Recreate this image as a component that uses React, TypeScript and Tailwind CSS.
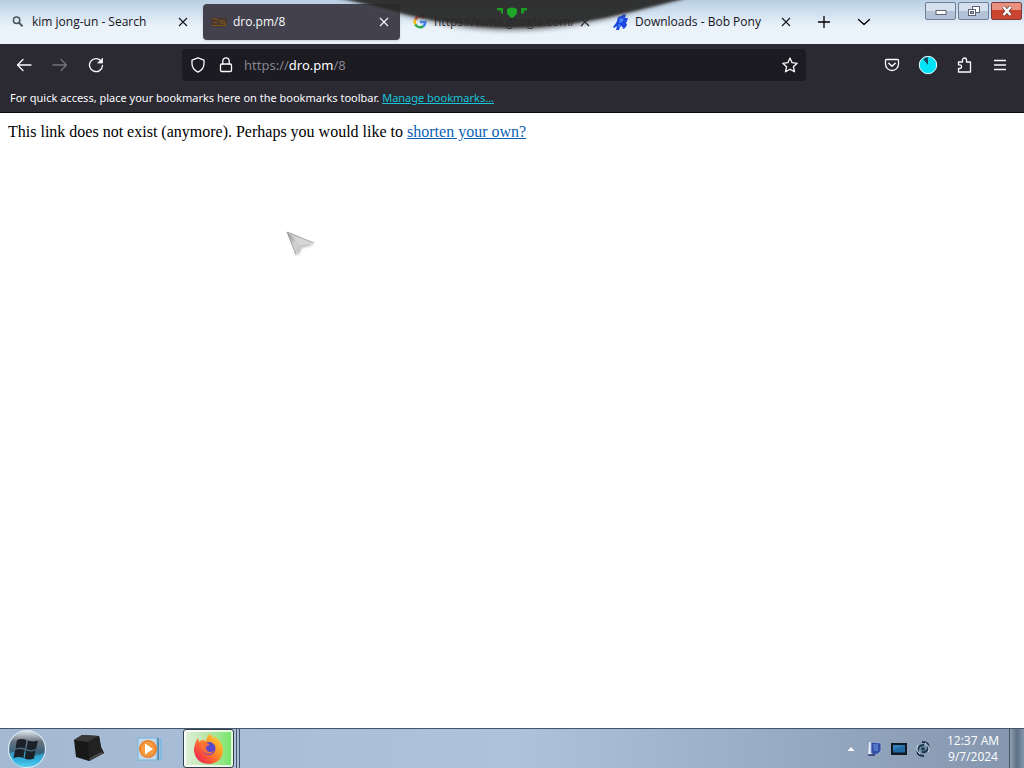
import { useState } from "react";
import type { ReactNode } from "react";
import clsx from "clsx";

interface Tab {
  id: string;
  title: string;
  icon: ReactNode;
}

const tabs: Tab[] = [
  { id: "search", title: "kim jong-un - Search", icon: <SearchIcon /> },
  { id: "dro", title: "dro.pm/8", icon: <DroIcon /> },
  { id: "google", title: "https://www.google.com/", icon: <GoogleIcon /> },
  { id: "pony", title: "Downloads - Bob Pony", icon: <PonyIcon /> },
];

function SearchIcon() {
  return (
    <svg className="size-4" viewBox="0 0 16 16" fill="none" stroke="#4a5560">
      <circle cx="6.6" cy="6.2" r="3.2" strokeWidth="1.5" />
      <path d="M9 8.8l3.6 3.6" strokeWidth="2" />
    </svg>
  );
}

function DroIcon() {
  return (
    <svg className="size-4" viewBox="0 0 16 16" fill="none">
      <rect x="0" y="3.5" width="16" height="9.5" fill="#49382f" />
      <path d="M1 5h5l2 2h6M1 11.5h14M2 8.5h4M9 9h5v2" stroke="#805417" strokeWidth="1" />
    </svg>
  );
}

function GoogleIcon() {
  return (
    <svg className="size-4" viewBox="0 0 16 16" fill="none" strokeWidth="2.5">
      <path d="M12.2 4A5.4 5.4 0 0 0 3.3 5.4" stroke="#ea4335" />
      <path d="M3.3 5.4a5.4 5.4 0 0 0 0 5" stroke="#fbbc05" />
      <path d="M3.3 10.4a5.4 5.4 0 0 0 8.2 1.6" stroke="#34a853" />
      <path d="M11.5 12a5.4 5.4 0 0 0 1.8-4H8" stroke="#4285f4" />
    </svg>
  );
}

function PonyIcon() {
  return (
    <svg className="size-4" viewBox="0 0 16 16">
      <path
        d="M5 3l3-1 3-2 2 1-1 3h3l-1 3-1 2 1 2-2 3-2 1-1-3-2 1-1 3H3l1-4-3 2-1-1 3-4 1-2z"
        fill="#1d49e0"
      />
      <path d="M7 4l4 1-2 3-3 1zM5 10l3 1-2 3z" fill="#4a86ff" />
    </svg>
  );
}

function CloseIcon() {
  return (
    <svg className="size-4" viewBox="0 0 16 16" fill="none" stroke="currentColor" strokeWidth="1.1">
      <path d="M4 4l8 8M12 4l-8 8" />
    </svg>
  );
}

function ToolIcon({ children, className }: { children: ReactNode; className?: string }) {
  return (
    <svg
      className={clsx("size-4 shrink-0", className)}
      viewBox="0 0 16 16"
      fill="none"
      stroke="currentColor"
      strokeWidth="1.3"
      strokeLinecap="round"
      strokeLinejoin="round"
    >
      {children}
    </svg>
  );
}

function IconButton({ label, className, children }: { label: string; className?: string; children: ReactNode }) {
  return (
    <button
      type="button"
      aria-label={label}
      className={clsx("flex h-8 w-9 items-center justify-center", className)}
    >
      {children}
    </button>
  );
}

function Notch() {
  return (
    <svg
      className="pointer-events-none absolute top-0 left-1/2 h-10 w-[360px] -translate-x-1/2"
      viewBox="0 0 360 40"
      aria-hidden="true"
    >
      <defs>
        <filter id="notchShadow" x="-5%" y="-40%" width="110%" height="180%">
          <feGaussianBlur stdDeviation="2" />
        </filter>
        <filter id="notchEdge">
          <feGaussianBlur stdDeviation="0.8" />
        </filter>
      </defs>
      <path d="M4 -3C60 10 105 31 178 31S300 12 358 -3z" fill="#555" opacity="0.6" filter="url(#notchShadow)" />
      <path d="M2 -3C60 8 105 28 178 28S300 10 360 -3z" fill="#252525" opacity="0.88" filter="url(#notchEdge)" />
      <path d="M165 8h6v6l-2-1v-2l-4-1z" fill="#1c9a24" />
      <path d="M175 9q5-3 10 0v4q-1 3-5 5-4-2-5-5z" fill="#1fa526" />
      <path d="M189 8h6v2l-3 1v2l-3 1z" fill="#1c9a24" />
    </svg>
  );
}

function WindowButtons() {
  const base =
    "flex h-[18px] w-[31px] items-center justify-center rounded-[2px] border";
  const pale = "border-[#6f7f97] bg-linear-to-b from-[#d5dfed] from-50% to-[#b3c2d6] to-50%";
  return (
    <div className="flex gap-0.5 self-start pt-0.5 pr-0.5">
      <button type="button" aria-label="Minimize" className={clsx(base, pale)}>
        <svg className="h-3 w-4" viewBox="0 0 16 12">
          <rect x="3" y="5.5" width="10" height="4" fill="#fff" stroke="#5f6670" />
        </svg>
      </button>
      <button type="button" aria-label="Restore" className={clsx(base, pale)}>
        <svg className="h-3 w-4" viewBox="0 0 16 12" fill="#fff" stroke="#596273">
          <rect x="6.5" y="1.5" width="7" height="6" />
          <rect x="2.5" y="4.5" width="7" height="6" />
          <rect x="4.5" y="6.5" width="3" height="2" fill="#9aa8bb" />
        </svg>
      </button>
      <button
        type="button"
        aria-label="Close"
        className={clsx(base, "border-[#7d3a3a] bg-linear-to-b from-[#e8917f] from-45% to-[#cb4430] to-45%")}
      >
        <svg className="h-3 w-4" viewBox="0 0 16 12" fill="none">
          <path d="M4.5 2l7 8M11.5 2l-7 8" stroke="#70403c" strokeWidth="4" />
          <path d="M4.5 2l7 8M11.5 2l-7 8" stroke="#fff" strokeWidth="2.4" />
        </svg>
      </button>
    </div>
  );
}

function TabStrip() {
  const [active, setActive] = useState("dro");

  return (
    <header className="relative flex h-11 bg-linear-to-b from-[#b9cfe4] to-[#eaf2fa] to-60% font-['Open_Sans','Noto_Sans',sans-serif]">
      <div className="flex min-w-0 flex-1 items-center gap-1 pl-0.5">
        {tabs.map((tab) => (
          <div
            key={tab.id}
            className={clsx(
              "flex h-9 w-[197px] min-w-0 items-center gap-1.5 rounded px-2",
              tab.id === active ? "bg-[#42414d] text-[#fbfbfe] shadow-sm" : "text-[#15141a]"
            )}
          >
            <button
              type="button"
              className="flex min-w-0 flex-1 items-center gap-1.5"
              onClick={() => setActive(tab.id)}
            >
              <span className="shrink-0">{tab.icon}</span>
              <span className="whitespace-nowrap">{tab.title}</span>
            </button>
            <button type="button" aria-label={`Close ${tab.title}`} className="shrink-0">
              <CloseIcon />
            </button>
          </div>
        ))}
        <IconButton label="New tab">
          <ToolIcon>
            <path d="M8 2.5v11M2.5 8h11" />
          </ToolIcon>
        </IconButton>
        <IconButton label="List all tabs">
          <ToolIcon>
            <path d="M2.500 5.500L8 10.500l5.500-5" />
          </ToolIcon>
        </IconButton>
      </div>
      <WindowButtons />
      <Notch />
    </header>
  );
}

function NavBar() {
  return (
    <nav className="flex h-[41px] items-center bg-[#2b2a33] px-1.5 text-[#fbfbfe]">
      <IconButton label="Back">
        <ToolIcon>
          <path d="M15 8H2M7 2.5L1.500 8 7 13.500" />
        </ToolIcon>
      </IconButton>
      <IconButton label="Forward" className="text-[#74737c]">
        <ToolIcon>
          <path d="M1 8h13M9 2.500L14.500 8 9 13.500" />
        </ToolIcon>
      </IconButton>
      <IconButton label="Reload">
        <ToolIcon>
          <path d="M13.400 4.500A6.500 6.500 0 1 0 14.500 8.500" />
          <path d="M14.500 1.500v4.500H10z" fill="currentColor" strokeWidth="0.8" />
        </ToolIcon>
      </IconButton>
      <div className="ml-17 flex h-8 min-w-0 max-w-[624px] flex-1 items-center rounded bg-[#1c1b22] px-2">
        <ToolIcon>
          <path d="M8 .8l6 2.300v3.700c0 3.700-2.600 6.700-6 8.400-3.400-1.700-6-4.700-6-8.400V3.100z" />
        </ToolIcon>
        <ToolIcon className="ml-3">
          <rect x="2.500" y="7" width="11" height="7.500" rx="1.200" />
          <path d="M4.800 7V4a3.200 3.200 0 0 1 6.400 0v3" />
        </ToolIcon>
        <div className="relative ml-2.5 min-w-0 flex-1 text-[13px] leading-5">
          <span aria-hidden="true" className="pointer-events-none absolute inset-0 text-[#85848d]">
            https://<span className="text-[#fbfbfe]">dro.pm</span>/8
          </span>
          <input
            aria-label="Address"
            defaultValue="https://dro.pm/8"
            className="block w-full bg-transparent text-transparent outline-none"
          />
        </div>
        <button type="button" aria-label="Bookmark this page">
          <ToolIcon>
            <path d="M8 1l2.100 4.700 5.100.6-3.800 3.400 1.100 5.100L8 12.200l-4.500 2.600 1.100-5.100L.8 6.300l5.100-.6z" />
          </ToolIcon>
        </button>
      </div>
      <div className="ml-auto flex">
        <IconButton label="Save to Pocket">
          <ToolIcon>
            <path d="M2.500 2.500h11c.7 0 1 .4 1 1V7a6.500 6.500 0 0 1-13 0V3.500c0-.6.3-1 1-1z" />
            <path d="M4.800 6.200L8 9.200l3.200-3" strokeWidth="1.500" />
          </ToolIcon>
        </IconButton>
        <IconButton label="Extension">
          <svg className="size-5" viewBox="0 0 20 20">
            <circle cx="10" cy="10" r="8.700" fill="#00e3f7" stroke="#eafcff" />
            <path d="M10 10L5.200 4.200Q7.400 2.300 10 2.300z" fill="#174c60" />
          </svg>
        </IconButton>
        <IconButton label="Extensions">
          <ToolIcon>
            <path d="M2.500 5h4V3a2 2 0 0 1 4 0v2h4v10h-12v-3.500h1.300a1.800 1.800 0 0 0 0-3.600H2.500z" />
          </ToolIcon>
        </IconButton>
        <IconButton label="Open application menu">
          <ToolIcon>
            <path d="M2.500 3.500h11M2.500 8h11M2.500 12.500h11" />
          </ToolIcon>
        </IconButton>
      </div>
    </nav>
  );
}

function StartOrb() {
  return (
    <svg className="size-10" viewBox="0 0 40 40">
      <defs>
        <linearGradient id="orb" x1="0" y1="0" x2="0" y2="1">
          <stop offset="0" stopColor="#e3e9ef" />
          <stop offset="0.3" stopColor="#67727f" />
          <stop offset="0.6" stopColor="#36617c" />
          <stop offset="0.8" stopColor="#259fd0" />
          <stop offset="1" stopColor="#8be8fb" />
        </linearGradient>
      </defs>
      <circle cx="20" cy="20" r="18.500" fill="url(#orb)" stroke="#d5ebf4" strokeWidth="1.200" />
      <path d="M3 24q10-5 17 0t17 0q-2 13-17 14T3 24z" fill="#38bce6" opacity="0.6" />
      <path
        d="M10 11q5-2 9.500 0l-1.500 8.500q-4-2-9.500 0zM21 11.500q5 2 10 0l-2 8.500q-5 2-9.500 0zM8 21q5-2 9.500 0l-1 8q-5-2-10 0zM19 21.500q5 2 9.500 0l-1.500 8q-5 2-9.500 0z"
        fill="#1c2029"
      />
    </svg>
  );
}

function BoxIcon() {
  return (
    <svg className="h-8 w-8" viewBox="0 0 32 32">
      <path d="M1 7L9 2l17 1 2 11 3 6-15 8-13-4z" fill="#181818" />
      <path d="M1 7L9 2l17 1-11 6z" fill="#393939" />
      <path d="M15 9l11-6 2 11 3 6-15 8z" fill="#222" />
      <path d="M17 25l11-6 3 1-15 8z" fill="#494949" />
    </svg>
  );
}

function PlayerIcon() {
  return (
    <svg className="h-8 w-8" viewBox="0 0 32 32">
      <path d="M25 5h2v22h-2z" fill="#83bce0" />
      <path d="M22 5h2v22h-2z" fill="#518bb4" />
      <rect x="3" y="5" width="19" height="22" fill="#c3d9eb" stroke="#78b3d7" />
      <circle cx="13" cy="16" r="9" fill="#ee7c20" />
      <circle cx="13" cy="16" r="7.500" fill="#f69a41" />
      <path d="M10 10.500l8 5.500-8 5.500z" fill="#fff" />
    </svg>
  );
}

function FirefoxIcon() {
  return (
    <svg className="size-8" viewBox="0 0 32 32">
      <defs>
        <linearGradient id="fox" x1="1" y1="0" x2="0" y2="1">
          <stop offset="0" stopColor="#ffe34a" />
          <stop offset="0.4" stopColor="#ff9422" />
          <stop offset="0.75" stopColor="#f6413f" />
          <stop offset="1" stopColor="#d91a73" />
        </linearGradient>
      </defs>
      <path
        d="M17 1q3 2 4 5 1-1 0-3 8 5 9 13 0 13-13 15Q3 31 1 18 1 11 5 5l1 4 3-2q2 0 4 1 1-5 4-7z"
        fill="url(#fox)"
      />
      <circle cx="16" cy="15.500" r="6.500" fill="#6a40cf" />
      <path d="M8 12q2-3 6-2l4 2q-4 0-5 2-1 3 3 4 3 0 5-1-1 4-6 4-6-1-7-9z" fill="#f6703a" />
      <path d="M15 9q6 0 7 6-1 4-5 4-4-1-3-4 1-3 3-2-1-2-2-4z" fill="#5747c9" />
    </svg>
  );
}

function Taskbar() {
  return (
    <footer className="flex h-10 border-t border-[#44546a] bg-linear-to-r from-[#a4b8d2] via-[#adc3dc] via-50% to-[#8496ae] font-['Open_Sans','Noto_Sans',sans-serif]">
      <div className="flex items-center">
        <button type="button" aria-label="Start" className="ml-[7px] flex">
          <StartOrb />
        </button>
        <button type="button" aria-label="Virtual machine" className="ml-[26px]">
          <BoxIcon />
        </button>
        <button type="button" aria-label="Media player" className="ml-[30px]">
          <PlayerIcon />
        </button>
        <div className="ml-4 flex h-full border-r border-[#455568] pr-0.5">
          <div className="flex h-full border-r border-[#455568] pr-0.5">
            <button
              type="button"
              aria-label="Firefox"
              className="flex h-full w-[51px] items-center justify-center rounded-[3px] border border-[#343e49] bg-linear-to-r from-[#e2f0dc] via-[#b6e5a5] to-[#6ee664] ring-2 ring-white/80 ring-inset"
            >
              <FirefoxIcon />
            </button>
          </div>
        </div>
      </div>
      <div className="ml-auto flex items-center">
        <button type="button" aria-label="Show hidden icons" className="flex w-6 justify-center">
          <svg className="h-2 w-2" viewBox="0 0 8 8">
            <path d="M4 2l3.500 4h-7z" fill="#fff" />
          </svg>
        </button>
        <svg className="ml-1 size-4" viewBox="0 0 16 16">
          <path d="M2 1h3v12l-2 2H1z" fill="#dce8f6" />
          <path d="M4 1l10 1v8q-3 4-7 4l-3-2z" fill="#344fa4" stroke="#a7b9df" strokeWidth="0.800" />
          <path d="M6 3h5v7H7z" fill="#5376c7" />
          <path d="M1 14h7" stroke="#1b2c66" strokeWidth="1.500" />
        </svg>
        <svg className="ml-2 size-4" viewBox="0 0 16 16">
          <rect x="0" y="2" width="16" height="12" fill="#111923" />
          <rect x="2" y="4" width="12" height="7.500" fill="#2369a4" />
          <path d="M2 4h12l-12 5z" fill="#347fb9" />
        </svg>
        <svg className="ml-2 size-4" viewBox="0 0 16 16" fill="none">
          <circle cx="8" cy="8" r="4" fill="#6a8ba5" />
          <path d="M7 1q8 0 6 7-2 4-6 3M9 15Q1 15 3 8q1-4 6-4" stroke="#1e354c" strokeWidth="2" />
          <path d="M10 2q6 4 3 9M5 13Q0 9 3 4" stroke="#d6e4ef" />
          <circle cx="8" cy="8" r="1.800" fill="#21384d" />
        </svg>
        <time className="ml-3 w-[60px] text-center text-xs leading-4 whitespace-nowrap text-white">
          12:37 AM
          <br />
          9/7/2024
        </time>
        <button
          type="button"
          aria-label="Show desktop"
          className="ml-1.5 h-full w-[15px] border-l border-[#43546a] bg-linear-to-r from-[#8fa0b1] via-[#5e7184] to-[#8498ad]"
        />
      </div>
    </footer>
  );
}

export default function App() {
  return (
    <div className="flex min-h-screen flex-col bg-white font-['Noto_Sans','Open_Sans',sans-serif] text-xs">
      <TabStrip />
      <NavBar />
      <div className="flex h-7 items-center border-b border-[#0c0c0d] bg-[#2b2a33] px-2.5 text-[11px] text-[#fbfbfe]">
        <p className="truncate">
          For quick access, place your bookmarks here on the bookmarks toolbar.{" "}
          <a href="#bookmarks" className="text-[#17c4d8] underline">
            Manage bookmarks...
          </a>
        </p>
      </div>
      <main className="relative flex-1 px-2 py-2.5 font-['Liberation_Serif',serif] text-base leading-[18px] text-black">
        This link does not exist (anymore). Perhaps you would like to{" "}
        <a href="#shorten" className="text-[#0b5fb5] underline">
          shorten your own?
        </a>
        <svg
          className="pointer-events-none absolute top-[118px] left-[286px] h-7 w-8"
          viewBox="0 0 32 28"
          aria-hidden="true"
        >
          <defs>
            <linearGradient id="pointer" x1="0" y1="0" x2="1" y2="1">
              <stop offset="0" stopColor="#8b8b8b" />
              <stop offset="0.4" stopColor="#d0d0d0" />
              <stop offset="1" stopColor="#c4c4c4" />
            </linearGradient>
            <filter id="pointerShadow">
              <feGaussianBlur stdDeviation="1.200" />
            </filter>
          </defs>
          <path d="M4 3l24 11-12 3-4 8z" fill="#999" opacity="0.6" filter="url(#pointerShadow)" />
          <path d="M1 1l27 11-13 2.500L10 24z" fill="url(#pointer)" />
          <path d="M1 1l27 11-13 2.500z" fill="#dcdcdc" opacity="0.7" />
          <path d="M1 1l9 23M1 1l27 11" stroke="#999" strokeWidth="0.800" />
        </svg>
      </main>
      <Taskbar />
    </div>
  );
}
